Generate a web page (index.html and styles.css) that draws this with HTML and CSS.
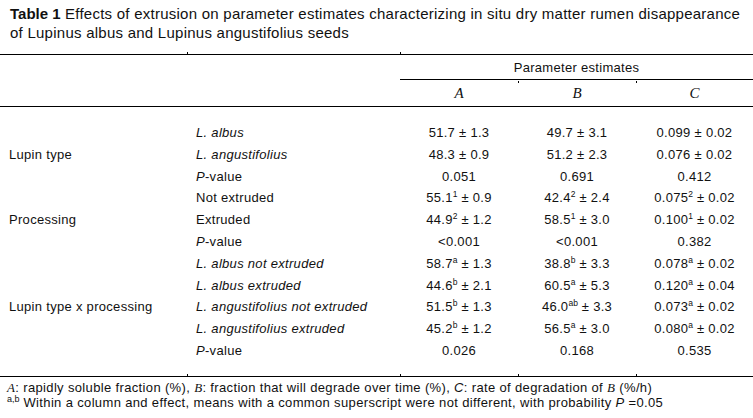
FILE: index.html
```html
<!DOCTYPE html>
<html>
<head>
<meta charset="utf-8">
<link rel="stylesheet" href="styles.css">
</head>
<body>
<div class="caption"><span class="label">Table 1</span> Effects of extrusion on parameter estimates characterizing in situ dry matter rumen disappearance<br>of Lupinus albus and Lupinus angustifolius seeds</div>

<div class="thead">
  <div class="pe">Parameter estimates</div>
  <div class="letter c3">A</div>
  <div class="letter c4">B</div>
  <div class="letter c5">C</div>
  <span class="tick t1"></span><span class="tick t2"></span>
  <span class="tick t3"></span><span class="tick t4"></span>
</div>

<div class="tbody">
  <div class="group g1">Lupin type</div>
  <div class="sub"><i>L. albus</i></div>
  <div class="num">51.7 ± 1.3</div><div class="num">49.7 ± 3.1</div><div class="num">0.099 ± 0.02</div>
  <div class="sub"><i>L. angustifolius</i></div>
  <div class="num">48.3 ± 0.9</div><div class="num">51.2 ± 2.3</div><div class="num">0.076 ± 0.02</div>
  <div class="sub"><i>P</i>-value</div>
  <div class="num">0.051</div><div class="num">0.691</div><div class="num">0.412</div>

  <div class="group g2">Processing</div>
  <div class="sub">Not extruded</div>
  <div class="num">55.1<sup>1</sup> ± 0.9</div><div class="num">42.4<sup>2</sup> ± 2.4</div><div class="num">0.075<sup>2</sup> ± 0.02</div>
  <div class="sub">Extruded</div>
  <div class="num">44.9<sup>2</sup> ± 1.2</div><div class="num">58.5<sup>1</sup> ± 3.0</div><div class="num">0.100<sup>1</sup> ± 0.02</div>
  <div class="sub"><i>P</i>-value</div>
  <div class="num">&lt;0.001</div><div class="num">&lt;0.001</div><div class="num">0.382</div>

  <div class="group g3">Lupin type x processing</div>
  <div class="sub"><i>L. albus not extruded</i></div>
  <div class="num">58.7<sup>a</sup> ± 1.3</div><div class="num">38.8<sup>b</sup> ± 3.3</div><div class="num">0.078<sup>a</sup> ± 0.02</div>
  <div class="sub"><i>L. albus extruded</i></div>
  <div class="num">44.6<sup>b</sup> ± 2.1</div><div class="num">60.5<sup>a</sup> ± 5.3</div><div class="num">0.120<sup>a</sup> ± 0.04</div>
  <div class="sub"><i>L. angustifolius not extruded</i></div>
  <div class="num">51.5<sup>b</sup> ± 1.3</div><div class="num">46.0<sup>ab</sup> ± 3.3</div><div class="num">0.073<sup>a</sup> ± 0.02</div>
  <div class="sub"><i>L. angustifolius extruded</i></div>
  <div class="num">45.2<sup>b</sup> ± 1.2</div><div class="num">56.5<sup>a</sup> ± 3.0</div><div class="num">0.080<sup>a</sup> ± 0.02</div>
  <div class="sub"><i>P</i>-value</div>
  <div class="num">0.026</div><div class="num">0.168</div><div class="num">0.535</div>
</div>

<div class="foot">
  <span class="tick b1"></span><span class="tick b2"></span><span class="tick b3"></span><span class="tick b4"></span>
  <p><i class="tnr">A</i>: rapidly soluble fraction (%), <i class="tnr">B</i>: fraction that will degrade over time (%), <i>C</i>: rate of degradation of <i class="tnr">B</i> (%/h)</p>
  <p><sup>a,b</sup> Within a column and effect, means with a common superscript were not different, with probability <i>P</i> =0.05</p>
</div>
</body>
</html>
```

FILE: styles.css
```css
html, body {
  margin: 0;
  padding: 0;
  background: #fff;
}
body {
  width: 753px;
  height: 418px;
  overflow: hidden;
  font-family: "Liberation Sans", Arial, sans-serif;
  color: #111;
}
.caption {
  padding: 4px 0 0 10px;
  font-size: 15px;
  letter-spacing: 0.25px;
  line-height: 19px;
  height: 50px;
  white-space: nowrap;
}
.label {
  font-weight: bold;
  letter-spacing: 0;
}
.thead {
  position: relative;
  display: grid;
  grid-template-columns: 187px 213px 118px 118px 117px;
  grid-template-rows: 25px 26px;
  border-top: 1px solid #000;
  border-bottom: 1px solid #000;
}
.pe {
  grid-column: 3 / 6;
  grid-row: 1;
  border-bottom: 1px solid #000;
  text-align: center;
  font-size: 13px;
  letter-spacing: 0.3px;
  line-height: 25px;
}
.letter {
  grid-row: 2;
  text-align: center;
  font-family: "Liberation Serif", "Times New Roman", serif;
  font-style: italic;
  font-size: 15px;
  line-height: 26px;
}
.c3 { grid-column: 3; }
.c4 { grid-column: 4; }
.c5 { grid-column: 5; }
.tick {
  position: absolute;
  width: 1px;
  height: 2px;
  background: #000;
}
.t1 { left: 187px; top: -3px; }
.t2 { left: 400px; top: -3px; }
.t3 { left: 518px; top: 26px; }
.t4 { left: 636px; top: 26px; }
.tbody {
  display: grid;
  grid-template-columns: 187px 213px 118px 118px 117px;
  grid-auto-rows: 21.8px;
  padding: 15px 0 14px;
  font-size: 13px;
  letter-spacing: 0.3px;
  line-height: 21.8px;
}
.group {
  grid-column: 1;
  padding-left: 9px;
  align-self: center;
}
.g1 { grid-row: 1 / 4; }
.g2 { grid-row: 4 / 7; }
.g3 { grid-row: 7 / 12; }
.sub {
  grid-column: 2;
  padding-left: 9px;
  white-space: nowrap;
}
.num {
  text-align: center;
  white-space: nowrap;
}
sup {
  font-size: 8.5px;
  letter-spacing: 0;
  line-height: 0;
  vertical-align: 5px;
}
.foot {
  position: relative;
  border-top: 1px solid #000;
  padding: 3px 0 0 7px;
  font-size: 13px;
  letter-spacing: 0.35px;
}
.foot p {
  margin: 0;
  line-height: 15px;
  white-space: nowrap;
}
.foot sup {
  font-size: 9px;
}
.tnr {
  font-family: "Liberation Serif", "Times New Roman", serif;
}
.b1 { left: 187px; top: -3px; }
.b2 { left: 400px; top: -3px; }
.b3 { left: 518px; top: -3px; }
.b4 { left: 636px; top: -3px; }
```
